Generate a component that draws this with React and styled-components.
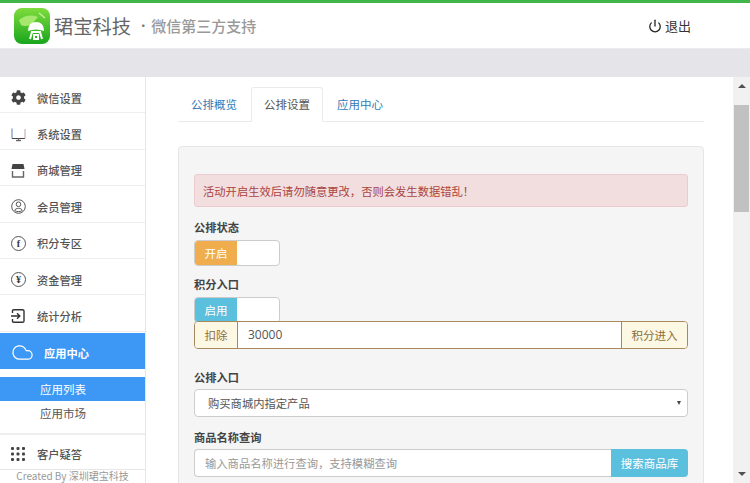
import React from "react";
import styled, {createGlobalStyle} from "styled-components";
import {Power, Cloud} from "lucide-react";
import {FaCog} from "react-icons/fa";

function LetterIcon({children}) {
    return <RoundIcon>{children}</RoundIcon>;
}

function MonitorIcon() {
    return (
        <svg width="15" height="15" viewBox="0 0 15 15" fill="none">
            <path d="M1 1.5V11.5" stroke="#5a7fb0"/>
            <path d="M1 11.5H14" stroke="#444"/>
            <path d="M14 2V11.5" stroke="#c9a0a0"/>
            <path d="M5 13.5H10" stroke="#666" strokeWidth="1.4"/>
            <path d="M7.5 11.5V13.5" stroke="#666"/>
        </svg>
    );
}

function StoreIcon() {
    return (
        <svg width="14" height="15" viewBox="0 0 14 15">
            <path d="M1.5 1H12.5L13.5 6H0.5Z" fill="#444"/>
            <path d="M1.5 8V14H12.5V8" fill="#fff" stroke="#666" strokeWidth="1.4"/>
        </svg>
    );
}

function UserIcon() {
    return (
        <svg width="15" height="15" viewBox="0 0 15 15" fill="none" stroke="#555">
            <circle cx="7.5" cy="7.5" r="6.8"/>
            <circle cx="7.5" cy="5.3" r="2.3"/>
            <path d="M3.8 11.5C4.2 8.6 10.8 8.6 11.2 11.5C10 13 5 13 3.8 11.5Z"/>
        </svg>
    );
}

function EnterIcon() {
    return (
        <svg width="14" height="14" viewBox="0 0 14 14" fill="none" stroke="#333" strokeWidth="1.4">
            <path d="M1.5 4V1.7C1.5 1 2 .7 2.5 .7H11.5C12.5 .7 13 1.2 13 2V12C13 12.8 12.5 13.3 11.5 13.3H2.5C2 13.3 1.5 13 1.5 12.3V10"/>
            <path d="M0 7H8.5M6 4.3L8.8 7L6 9.7"/>
        </svg>
    );
}

function Logo() {
    return (
        <svg width="36" height="36" viewBox="0 0 36 36">
            <defs>
                <linearGradient id="logoBg" x1="0" y1="0" x2="0" y2="1">
                    <stop offset="0" stopColor="#7fdc3c"/>
                    <stop offset="1" stopColor="#18a51e"/>
                </linearGradient>
            </defs>
            <rect width="36" height="36" rx="8" fill="url(#logoBg)"/>
            <path d="M5 12 Q14 5 24 9 L17 17 Q10 19 7 17 Z" fill="#a6e86d"/>
            <path d="M25 5 L31 10" stroke="#c4f09a" strokeWidth="1.5"/>
            <path d="M14 23 Q14 14 22 14 Q30 14 30 23 Q22 20 14 23 Z" fill="#fff"/>
            <path d="M17 24 H27 M18 24 L16 31 M26 24 L28 31 M20 27 H24 V31 H20 Z" stroke="#fff" strokeWidth="2" fill="none"/>
        </svg>
    );
}

function DotsIcon() {
    return (
        <svg width="14" height="14" viewBox="0 0 14 14" fill="#444">
            {[1.5, 7, 12.5].map(y => [1.5, 7, 12.5].map(x => (
                <rect key={`${x}-${y}`} x={x - 1.5} y={y - 1.5} width="3" height="3" rx="1"/>
            )))}
        </svg>
    );
}

const menuTop = [
    {label: "微信设置", icon: <FaCog size={15} color="#444"/>},
    {label: "系统设置", icon: <MonitorIcon/>},
    {label: "商城管理", icon: <StoreIcon/>},
    {label: "会员管理", icon: <UserIcon/>},
    {label: "积分专区", icon: <LetterIcon>f</LetterIcon>},
    {label: "资金管理", icon: <LetterIcon>¥</LetterIcon>},
    {label: "统计分析", icon: <EnterIcon/>},
];

export default function App() {
    return (
        <Page>
            <GlobalStyle/>
            <Header>
                <Brand>
                    <Logo/>
                    <BrandName>珺宝科技</BrandName>
                    <BrandDot>•</BrandDot>
                    <BrandSub>微信第三方支持</BrandSub>
                </Brand>
                <Logout>
                    <Power size={14} strokeWidth={2.2} color="#222"/>
                    <span>退出</span>
                </Logout>
            </Header>
            <GreyBand/>
            <Body>
                <Sidebar>
                    {menuTop.map(item => (
                        <MenuItem key={item.label}>
                            <MenuIcon>{item.icon}</MenuIcon>
                            <span>{item.label}</span>
                        </MenuItem>
                    ))}
                    <ActiveItem>
                        <Cloud size={23} strokeWidth={1.3} color="#fff"/>
                        <span>应用中心</span>
                    </ActiveItem>
                    <SubMenu>
                        <SubItem $active>应用列表</SubItem>
                        <SubItem>应用市场</SubItem>
                    </SubMenu>
                    <LastItem>
                        <MenuIcon><DotsIcon/></MenuIcon>
                        <span>客户疑答</span>
                    </LastItem>
                    <Credit>Created By 深圳珺宝科技</Credit>
                </Sidebar>
                <Main>
                    <Tabs>
                        <Tab>公排概览</Tab>
                        <Tab $active>公排设置</Tab>
                        <Tab>应用中心</Tab>
                    </Tabs>
                    <Panel>
                        <Alert>活动开启生效后请勿随意更改，否则会发生数据错乱！</Alert>
                        <FieldLabel>公排状态</FieldLabel>
                        <Toggle>
                            <ToggleOn $color="#f0ad4e">开启</ToggleOn>
                        </Toggle>
                        <FieldLabel $top={10}>积分入口</FieldLabel>
                        <Toggle>
                            <ToggleOn $color="#5bc0de">启用</ToggleOn>
                        </Toggle>
                        <WarnGroup>
                            <WarnAddon>扣除</WarnAddon>
                            <WarnValue>30000</WarnValue>
                            <WarnAddonEnd>积分进入</WarnAddonEnd>
                        </WarnGroup>
                        <FieldLabel $top={20}>公排入口</FieldLabel>
                        <SelectBox>
                            <span>购买商城内指定产品</span>
                            <SelectCaret/>
                        </SelectBox>
                        <FieldLabel $top={12}>商品名称查询</FieldLabel>
                        <SearchGroup>
                            <SearchInput>输入商品名称进行查询，支持模糊查询</SearchInput>
                            <SearchButton>搜索商品库</SearchButton>
                        </SearchGroup>
                    </Panel>
                </Main>
                <Scrollbar>
                    <ArrowUp/>
                    <Thumb/>
                    <ArrowDown/>
                </Scrollbar>
            </Body>
        </Page>
    );
}

const GlobalStyle = createGlobalStyle`
  html, body {
    margin: 0;
    padding: 0;
    overflow: hidden;
  }
  body {
    font-family: "Noto Sans CJK SC", "Open Sans", sans-serif;
    font-size: 12px;
    color: #333;
  }
  * {
    box-sizing: border-box;
  }
`;

const Page = styled.div`
  width: 750px;
  height: 483px;
  display: flex;
  flex-direction: column;
  overflow: hidden;
  background: #e4e4e9;
`;

const Header = styled.header`
  height: 49px;
  flex: none;
  background: #fff;
  border-top: 3px solid #3fb54a;
  border-bottom: 1px solid #ececf0;
  display: flex;
  align-items: center;
  justify-content: space-between;
  padding: 0 59px 0 14px;
`;

const Brand = styled.div`
  display: flex;
  align-items: center;
`;

const BrandName = styled.div`
  font-size: 19.3px;
  color: #666;
  margin-left: 4px;
`;

const BrandDot = styled.div`
  font-size: 12px;
  color: #777;
  margin: 0 2px 0 6px;
`;

const BrandSub = styled.div`
  font-size: 15px;
  font-weight: 500;
  color: #999;
`;

const Logout = styled.div`
  display: flex;
  align-items: center;
  gap: 3px;
  font-size: 13px;
  color: #333;
`;

const GreyBand = styled.div`
  height: 28px;
  flex: none;
`;

const Body = styled.div`
  flex: 1;
  min-height: 0;
  display: flex;
`;

const Sidebar = styled.nav`
  width: 146px;
  flex: none;
  background: #fff;
  border-right: 1px solid #e6e6e6;
  overflow: hidden;
`;

const MenuItem = styled.div`
  height: 36.4px;
  display: flex;
  align-items: center;
  padding: 6px 0 0 11px;
  font-size: 11.25px;
  font-weight: 500;
  color: #555;
  border-bottom: 1px solid #eee;
`;

const MenuIcon = styled.div`
  width: 26px;
  flex: none;
  display: flex;
  align-items: center;
`;

const RoundIcon = styled.div`
  width: 15px;
  height: 15px;
  border: 1px solid #555;
  border-radius: 50%;
  font-size: 10px;
  line-height: 13px;
  text-align: center;
  color: #333;
  font-family: "Liberation Serif", serif;
  font-weight: bold;
`;

const ActiveItem = styled.div`
  height: 36px;
  margin-top: 1px;
  display: flex;
  align-items: center;
  gap: 10px;
  padding: 4px 0 0 11px;
  background: #3d98f5;
  color: #fff;
  font-size: 11.25px;
  font-weight: 700;
`;

const SubMenu = styled.div`
  padding: 8px 0 7px;
  border-bottom: 2px solid #eee;
`;

const SubItem = styled.div`
  height: 24.5px;
  line-height: 24.5px;
  padding-left: 40px;
  font-size: 11.5px;
  color: ${props => props.$active ? "#fff" : "#555"};
  background: ${props => props.$active ? "#3d98f5" : "transparent"};
`;

const LastItem = styled(MenuItem)`
  height: 35px;
  padding-top: 4px;
  border-bottom: 1px solid #e6e6e6;
`;

const Credit = styled.div`
  text-align: center;
  font-size: 10px;
  line-height: 12px;
  color: #999;
  white-space: nowrap;
`;

const Main = styled.main`
  flex: 1;
  min-width: 0;
  background: #fff;
  padding: 10px 29px 0 32px;
  overflow: hidden;
`;

const Tabs = styled.div`
  display: flex;
  gap: 1px;
  height: 35px;
  border-bottom: 1px solid #eaeaea;
`;

const Tab = styled.div`
  width: 72px;
  height: ${props => props.$active ? 35 : 34}px;
  line-height: 33px;
  text-align: center;
  font-size: 11.5px;
  color: ${props => props.$active ? "#555" : "#337ab7"};
  background: ${props => props.$active ? "#fff" : "transparent"};
  border: 1px solid ${props => props.$active ? "#eaeaea" : "transparent"};
  border-bottom-color: ${props => props.$active ? "#fff" : "transparent"};
  border-radius: 3px 3px 0 0;
`;

const Panel = styled.section`
  margin-top: 24px;
  padding: 27px 15px 0;
  height: 400px;
  background: #f5f5f5;
  border: 1px solid #e6e6e6;
  border-radius: 4px;
`;

const Alert = styled.div`
  height: 33px;
  line-height: 33px;
  padding-left: 8px;
  font-size: 11.3px;
  color: #a94442;
  background: #f2dede;
  border: 1px solid #ebccd1;
  border-radius: 3px;
`;

const FieldLabel = styled.div`
  margin-top: ${props => props.$top ?? 12}px;
  height: 17px;
  line-height: 17px;
  font-size: 11.25px;
  font-weight: 700;
  color: #444;
`;

const Toggle = styled.div`
  margin-top: 4px;
  width: 86px;
  height: 26px;
  background: #fff;
  border: 1px solid #ccc;
  border-radius: 4px;
  overflow: hidden;
`;

const ToggleOn = styled.div`
  width: 42px;
  height: 100%;
  line-height: 25px;
  text-align: center;
  font-size: 11.5px;
  color: #fff;
  background: ${props => props.$color};
`;

const WarnGroup = styled.div`
  display: flex;
  height: 28px;
  margin-top: -2px;
  position: relative;
  background: #fff;
  border: 1px solid #a78a5b;
  border-radius: 4px;
  overflow: hidden;
`;

const WarnAddon = styled.div`
  width: 43px;
  flex: none;
  line-height: 26px;
  text-align: center;
  font-size: 11.5px;
  color: #8a6d3b;
  background: #fcf8e3;
  border-right: 1px solid #a78a5b;
`;

const WarnValue = styled.div`
  flex: 1;
  padding-left: 10px;
  line-height: 26px;
  font-family: "Open Sans", sans-serif;
  font-size: 12px;
  color: #555;
`;

const WarnAddonEnd = styled(WarnAddon)`
  width: 66px;
  border-right: 0;
  border-left: 1px solid #a78a5b;
`;

const SelectBox = styled.div`
  margin-top: 3px;
  height: 28px;
  padding: 0 6px 0 13px;
  display: flex;
  align-items: center;
  justify-content: space-between;
  font-size: 11.3px;
  color: #555;
  background: #fff;
  border: 1px solid #ccc;
  border-radius: 4px;
`;

const SelectCaret = styled.div`
  width: 0;
  height: 0;
  border-left: 2.5px solid transparent;
  border-right: 2.5px solid transparent;
  border-top: 4px solid #444;
`;

const SearchGroup = styled.div`
  display: flex;
  height: 28px;
  margin-top: 3px;
`;

const SearchInput = styled.div`
  flex: 1;
  padding-left: 10px;
  line-height: 27px;
  font-size: 11.3px;
  color: #999;
  background: #fff;
  border: 1px solid #ccc;
  border-right: 0;
  border-radius: 4px 0 0 4px;
`;

const SearchButton = styled.div`
  width: 77px;
  flex: none;
  line-height: 28px;
  text-align: center;
  font-size: 11.5px;
  color: #fff;
  background: #5bc0de;
  border-radius: 0 4px 4px 0;
`;

const Scrollbar = styled.div`
  width: 17px;
  flex: none;
  background: #f1f1f1;
  display: flex;
  flex-direction: column;
  align-items: center;
  justify-content: space-between;
  position: relative;
`;

const ArrowUp = styled.div`
  margin-top: 7px;
  width: 0;
  height: 0;
  border-left: 4px solid transparent;
  border-right: 4px solid transparent;
  border-bottom: 4px solid #505050;
`;

const ArrowDown = styled.div`
  margin-bottom: 7px;
  width: 0;
  height: 0;
  border-left: 4px solid transparent;
  border-right: 4px solid transparent;
  border-top: 4px solid #505050;
`;

const Thumb = styled.div`
  position: absolute;
  top: 28px;
  left: 1px;
  width: 15px;
  height: 107px;
  background: #c1c1c1;
`;
